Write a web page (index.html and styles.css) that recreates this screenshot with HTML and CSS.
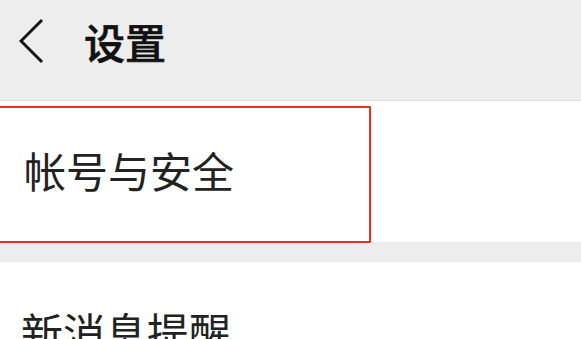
FILE: index.html
```html
<!DOCTYPE html>
<html lang="zh-CN">
<head>
  <meta charset="UTF-8">
  <meta name="viewport" content="width=device-width, initial-scale=1.0">
  <title>设置</title>
  <link rel="stylesheet" href="styles.css">
</head>
<body>
  <!-- Top bar -->
  <header class="topbar">
    <svg class="back" width="26" height="46" viewBox="0 0 26 46" aria-hidden="true">
      <polyline points="23,2 2,23 23,44" fill="none" stroke="#111" stroke-width="3" stroke-linejoin="miter"/>
    </svg>
    <h1 class="title">设置</h1>
  </header>

  <!-- Settings list -->
  <ul class="menu">
    <li class="menu-item">
      帐号与安全
      <span class="highlight"></span>
    </li>
  </ul>

  <div class="gap"></div>

  <ul class="menu">
    <li class="menu-item menu-item-second">新消息提醒</li>
  </ul>
</body>
</html>
```

FILE: styles.css
```css
/* General */
body {
  margin: 0;
  padding: 0;
  background: #ffffff;
  font-family: "Noto Sans CJK SC", "Noto Sans", sans-serif;
  color: #222;
  overflow: hidden;
}

/* Top bar */
.topbar {
  display: flex;
  align-items: center;
  height: 101px;
  padding: 0 0 18px 19px;
  box-sizing: border-box;
  background: #ededed;
  border-bottom: 1px solid #dcdcdc;
}

.back {
  display: block;
  margin-top: -1px;
}

.title {
  margin: 0 0 0 39px;
  font-size: 41px;
  line-height: 1;
  font-weight: 500;
  color: #111;
  padding-top: 1px;
  -webkit-text-stroke: 0.6px #111;
}

/* List */
.menu {
  list-style: none;
  margin: 0;
  padding: 0;
  background: #fff;
}

.menu-item {
  position: relative;
  display: flex;
  align-items: center;
  height: 141px;
  padding: 0 0 4px 24px;
  box-sizing: border-box;
  font-size: 42px;
  line-height: 1;
  color: #222;
}

.menu-item-second {
  padding-left: 21px;
}

/* Red annotation box */
.highlight {
  position: absolute;
  left: -2px;
  top: 5px;
  width: 373px;
  height: 137px;
  box-sizing: border-box;
  border: 2px solid #e5302a;
  border-radius: 1px;
}

.gap {
  height: 20px;
  background: #ededed;
}
```
